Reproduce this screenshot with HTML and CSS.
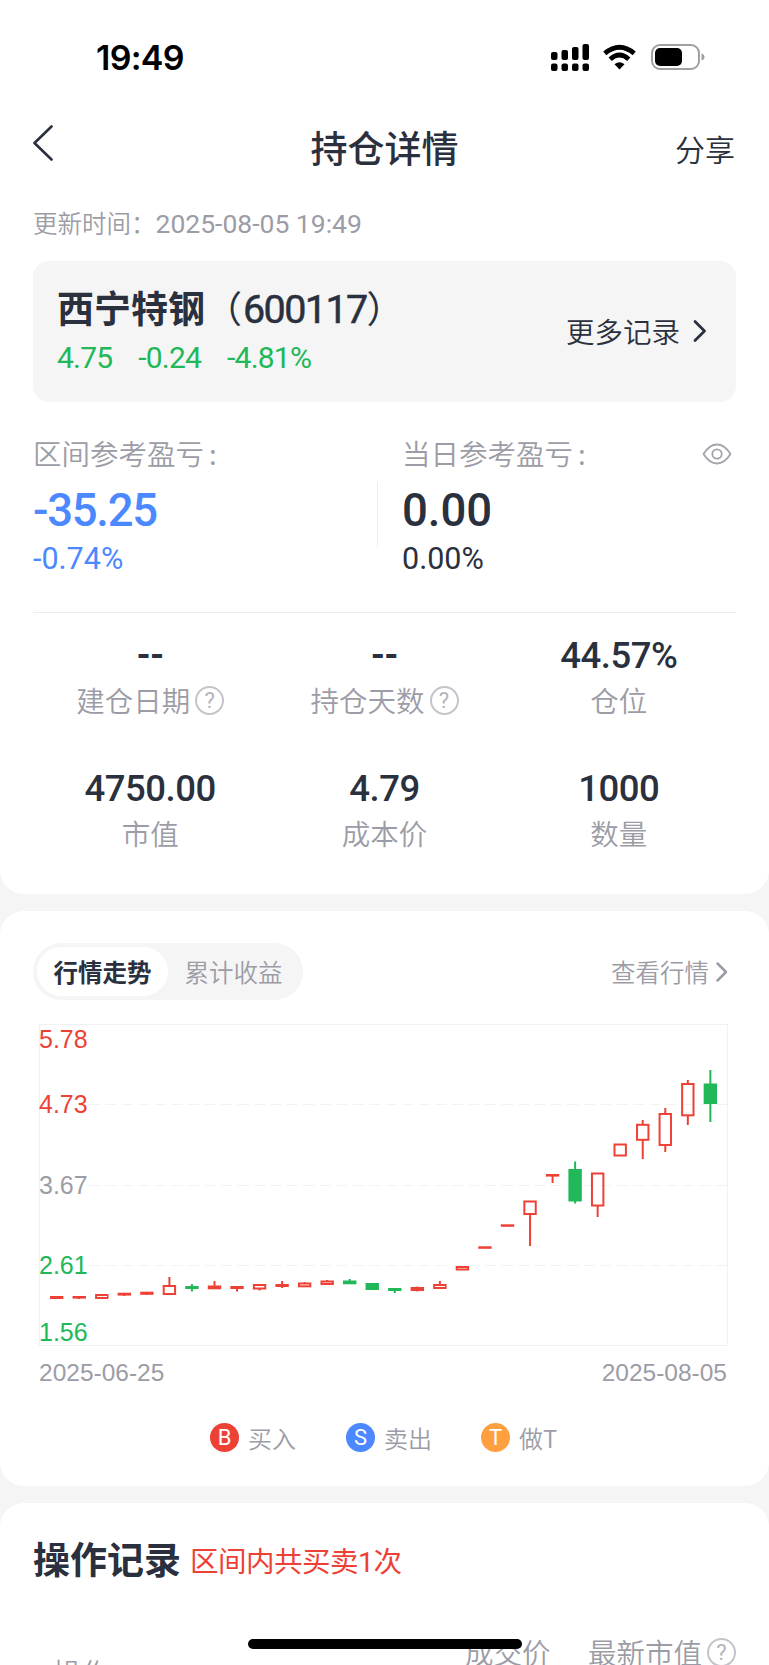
FILE: index.html
```html
<!DOCTYPE html>
<html lang="zh-CN">
	<head>
		<meta charset="utf-8">
		<title>持仓详情</title>
		<link rel="stylesheet" href="styles.css">
	</head>
	<body>
		<div class="page">
			<div class="card top">
				<div class="status">
					<span class="time">19:49</span>
					<svg class="status_icons" width="156" height="30" viewBox="0 0 156 30">
						<g fill="#000">
							<rect x="1" y="9" width="6.500" height="8" rx="2"/>
							<rect x="11.500" y="7" width="6.500" height="10" rx="2"/>
							<rect x="22" y="4" width="6.500" height="13" rx="2"/>
							<rect x="32.500" y="1" width="6.500" height="16" rx="2"/>
							<rect x="1" y="20.500" width="6.500" height="7.500" rx="2"/>
							<rect x="11.500" y="20.500" width="6.500" height="7.500" rx="2"/>
							<rect x="22" y="20.500" width="6.500" height="7.500" rx="2"/>
							<rect x="32.500" y="20.500" width="6.500" height="7.500" rx="2"/>
							<path d="M69.500 26.500 L64.500 21.300 Q69.500 17 74.500 21.300 Z"/>
							<rect x="105" y="5" width="27" height="18" rx="5"/>
						</g>
						<g fill="none" stroke="#000" stroke-width="4.800">
							<path d="M54.800 10.300 Q69.500 -2 84.200 10.300"/>
							<path d="M60.200 16.200 Q69.500 8 78.800 16.200"/>
						</g>
						<rect x="102" y="2" width="47" height="24" rx="8" fill="none" stroke="#a0a0a0" stroke-width="2"/>
						<path d="M151.500 10.500 Q154.500 11.500 154.500 14 Q154.500 16.500 151.500 17.500 Z" fill="#a0a0a0"/>
					</svg>
				</div>
				<div class="nav">
					<svg width="24" height="38" viewBox="0 0 24 38"><path d="M18.500 2.500 L1.500 19 L18.500 35.500" fill="none" stroke="#2a303d" stroke-width="2.600" stroke-linecap="round" stroke-linejoin="round"/></svg>
					<h1>持仓详情</h1>
					<span class="share">分享</span>
				</div>
				<div class="update">更新时间：<span class="update_time">2025-08-05 19:49</span></div>

				<div class="stock">
					<div>
						<div class="stock_name">西宁特钢<span class="code">（<i>600117</i>）</span></div>
						<div class="stock_price"><span>4.75</span><span>-0.24</span><span>-4.81%</span></div>
					</div>
					<div class="more">更多记录
						<svg width="16" height="24" viewBox="0 0 16 24"><path d="M3 2.500 L12.500 12 L3 21.500" fill="none" stroke="#2a303d" stroke-width="2.800" stroke-linecap="round" stroke-linejoin="round"/></svg>
					</div>
				</div>

				<div class="profit">
					<div class="profit_item blue">
						<div class="label">区间参考盈亏<i>:</i></div>
						<div class="big">-35.25</div>
						<div class="rate">-0.74%</div>
					</div>
					<div class="profit_item right">
						<div class="label">当日参考盈亏<i>:</i>
							<svg class="eye" width="30" height="24" viewBox="0 0 30 24"><path d="M1.500 12 Q7.500 2.500 15 2.500 Q22.500 2.500 28.500 12 Q22.500 21.500 15 21.500 Q7.500 21.500 1.500 12 Z" fill="none" stroke="#a3a3ad" stroke-width="1.800" stroke-linejoin="round"/><circle cx="15" cy="12" r="4.700" fill="none" stroke="#a3a3ad" stroke-width="1.800"/></svg>
						</div>
						<div class="big">0.00</div>
						<div class="rate">0.00%</div>
					</div>
				</div>

				<div class="grid">
					<div class="cell"><b class="none">--</b><span>建仓日期<em class="help">?</em></span></div>
					<div class="cell"><b class="none">--</b><span>持仓天数<em class="help">?</em></span></div>
					<div class="cell"><b>44.57%</b><span>仓位</span></div>
					<div class="cell"><b>4750.00</b><span>市值</span></div>
					<div class="cell"><b>4.79</b><span>成本价</span></div>
					<div class="cell"><b>1000</b><span>数量</span></div>
				</div>
			</div>

			<div class="card trend">
				<div class="trend_head">
					<div class="tabs">
						<span class="current">行情走势</span>
						<span>累计收益</span>
					</div>
					<div class="look">查看行情
						<svg width="14" height="22" viewBox="0 0 14 22"><path d="M2.500 2.500 L11 11 L2.500 19.500" fill="none" stroke="#9c9ca6" stroke-width="2.500" stroke-linecap="round" stroke-linejoin="round"/></svg>
					</div>
				</div>
				<!-- K线图 -->
				<svg class="chart" id="chart" width="690" height="324" viewBox="39 1024 690 324">
					<rect class="frame" x="39.500" y="1024.500" width="688" height="321"/>
					<path class="dash" d="M89 1104.500 H727 M89 1185.500 H727 M89 1265.500 H727"/>
					<text class="up" x="39" y="1047.500">5.78</text>
					<text class="up" x="39" y="1113">4.73</text>
					<text class="gray" x="39" y="1193.500">3.67</text>
					<text class="down" x="39" y="1274">2.61</text>
					<text class="down" x="39" y="1340.500">1.56</text>
				</svg>
				<div class="dates"><span>2025-06-25</span><span>2025-08-05</span></div>
				<div class="legend">
					<div><i class="buy">B</i>买入</div>
					<div><i class="sell">S</i>卖出</div>
					<div><i class="both">T</i>做T</div>
				</div>
			</div>

			<div class="card record">
				<div class="record_head"><h2>操作记录</h2><span>区间内共买卖1次</span></div>
				<div class="record_cols">
					<span class="col_op">操作</span>
					<span class="col_price">成交价</span>
					<span class="col_value">最新市值<em class="help">?</em></span>
				</div>
			</div>
			<div class="home_bar"></div>
		</div>
		<script src="chart.js"></script>
	</body>
</html>
```
FILE: chart.js
```js
/* 每根K线: 最高, 实体上, 实体下, 最低, 是否上涨 */
var list = [
	[1297, 1297, 1298, 1299, 1],
	[1296, 1297, 1297.6, 1299, 1],
	[1295, 1295, 1298, 1298, 1],
	[1293, 1293.7, 1294.6, 1296, 1],
	[1292, 1292.7, 1293.8, 1295, 1],
	[1277, 1286, 1294, 1294, 1],
	[1284, 1287, 1288, 1291.500, 0],
	[1281, 1286.500, 1288.300, 1289, 1],
	[1286, 1287, 1288, 1291.500, 1],
	[1284.500, 1285, 1288.500, 1290.500, 1],
	[1281, 1285, 1286, 1288, 1],
	[1282, 1283.500, 1286.300, 1287, 1],
	[1280, 1281.500, 1284, 1285, 1],
	[1279, 1281.500, 1283.300, 1284, 0],
	[1283, 1284, 1289, 1290, 0],
	[1288, 1289, 1290, 1293, 0],
	[1286.500, 1288, 1290, 1291.500, 1],
	[1281, 1285, 1288, 1288, 1],
	[1267, 1267, 1269.500, 1270, 1],
	[1247, 1247.300, 1247.800, 1248, 1],
	[1225, 1225.300, 1225.800, 1226, 1],
	[1201, 1201.500, 1214, 1246, 1],
	[1174, 1175, 1175.600, 1183, 1],
	[1161.500, 1170, 1200.500, 1203.500, 0],
	[1173, 1173.500, 1205.500, 1217, 1],
	[1144, 1144.500, 1155.500, 1156, 1],
	[1120, 1124.800, 1139.800, 1159, 1],
	[1108, 1114, 1145, 1152, 1],
	[1080, 1084, 1115.300, 1125, 1],
	[1070, 1084.500, 1103, 1122, 0]
];
var html = '';
for (var i = 0; i < list.length; i++) {
	var k = list[i];
	var x = 56.7 + i * 22.54;
	var name = k[4] ? 'k_up' : 'k_down';
	/* 上影线和下影线 */
	html += '<path class="' + name + '" d="M' + x + ' ' + k[0] + 'V' + k[1] + 'M' + x + ' ' + k[2] + 'V' + k[3] + '"/>';
	html += '<rect class="' + name + '" x="' + (x - 5.7) + '" y="' + k[1] + '" width="11.4" height="' + (k[2] - k[1]) + '"/>';
}
document.getElementById('chart').innerHTML += html;
```
FILE: styles.css
```css
body{
	margin: 0;
	background-color: #f5f5f5;
	font-family: "Noto Sans CJK SC", sans-serif;
	color: #2a303d;
}
.page{
	position: relative;
	width: 769px;
	height: 1665px;
	overflow: hidden;
}
.card{
	box-sizing: border-box;
	background-color: #fff;
	border-radius: 24px;
	padding: 0 33px;
}
i, em{
	font-style: normal;
}
/* 数字字体 */
.update_time, .code i, .stock_price, .big, .rate, .cell b, .help, .legend i{
	font-family: Roboto, sans-serif;
}
/* 顶部 */
.top{
	height: 894px;
	border-radius: 0 0 24px 24px;
	overflow: hidden;
}
.status{
	display: flex;
	justify-content: space-between;
	align-items: center;
	height: 30px;
	margin: 43px 30px 0 63px;
}
.time{
	font: 600 34px/30px Inter, sans-serif;
	letter-spacing: -0.7px;
	color: #000;
}
.nav{
	display: grid;
	grid-template-columns: 100px 1fr 100px;
	align-items: center;
	height: 60px;
	margin-top: 43px;
}
.nav svg{
	margin-top: -9px;
}
.nav h1{
	margin: 0;
	font-size: 37px;
	line-height: 60px;
	font-weight: 500;
	text-align: center;
}
.share{
	padding-top: 2px;
	padding-right: 1px;
	font-size: 30px;
	line-height: 60px;
	font-weight: 350;
	text-align: right;
}
.update{
	margin-top: 29px;
	height: 36px;
	font-size: 24.500px;
	line-height: 36px;
	font-weight: 350;
	color: #9c9ca6;
}
.update_time{
	font-size: 26.500px;
	font-weight: 400;
}
.stock{
	display: flex;
	justify-content: space-between;
	align-items: center;
	box-sizing: border-box;
	height: 141px;
	margin-top: 20px;
	padding: 0 28px 0 24px;
	border-radius: 16px;
	background-color: #f5f5f5;
}
.stock_name{
	height: 48px;
	font-size: 37px;
	line-height: 50px;
	font-weight: 700;
	white-space: nowrap;
}
.code{
	font-weight: 400;
}
.code i{
	margin-left: 1px;
	font-size: 39.500px;
	letter-spacing: -1.600px;
	-webkit-text-stroke: 0.5px #2a303d;
}
.stock_price{
	display: flex;
	gap: 26px;
	padding-top: 4px;
	font-size: 30px;
	line-height: 48px;
	letter-spacing: -0.8px;
	color: #20b858;
}
.more{
	display: flex;
	align-items: center;
	gap: 12px;
	margin-top: -2px;
	font-size: 28.500px;
	font-weight: 350;
}
/* 盈亏 */
.profit{
	display: flex;
	height: 210px;
	border-bottom: 1px solid #ececec;
}
.profit_item{
	position: relative;
	width: 344px;
	padding-top: 29px;
}
.right{
	width: 334px;
	padding-left: 25px;
}
.right::before{
	content: "";
	position: absolute;
	left: 0;
	top: 80px;
	width: 1px;
	height: 65px;
	background-color: #ececec;
}
.label{
	display: flex;
	align-items: center;
	height: 42px;
	font-size: 28.500px;
	font-weight: 350;
	color: #9c9ca6;
}
.label i{
	margin-left: 5px;
}
.eye{
	margin-left: auto;
	margin-top: 4px;
	margin-right: 4px;
}
.big{
	height: 60px;
	margin-top: 8px;
	font-size: 45.500px;
	line-height: 60px;
	font-weight: 500;
}
.rate{
	font-size: 30.500px;
	line-height: 36px;
}
.blue .big, .blue .rate{
	color: #4c88ff;
}
.blue .big{
	letter-spacing: -1.300px;
}
.grid{
	display: grid;
	grid-template-columns: 1fr 1fr 1fr;
	grid-auto-rows: 133px;
	padding-top: 17px;
}
.cell{
	text-align: center;
}
.cell b{
	display: block;
	height: 48px;
	font-size: 36.500px;
	line-height: 51px;
	letter-spacing: -0.5px;
	font-weight: 500;
}
.cell .none{
	font-family: "Noto Sans CJK SC", sans-serif;
	line-height: 41px;
	letter-spacing: 0;
	font-weight: 700;
}
.cell span{
	display: flex;
	justify-content: center;
	align-items: center;
	height: 42px;
	font-size: 28.500px;
	font-weight: 350;
	color: #9c9ca6;
}
.help{
	box-sizing: border-box;
	width: 29px;
	height: 29px;
	margin-left: 5px;
	border: 2px solid #c4c4ca;
	border-radius: 50%;
	font-size: 22px;
	line-height: 26px;
	font-weight: 400;
	text-align: center;
	color: #b4b4bc;
}
.cell .help{
	margin-top: 2px;
}
/* 走势 */
.trend{
	height: 575px;
	margin-top: 17px;
	padding-top: 32px;
}
.trend_head{
	display: flex;
	justify-content: space-between;
	align-items: center;
}
.tabs{
	display: flex;
	box-sizing: border-box;
	width: 270px;
	height: 57px;
	padding: 4px;
	border-radius: 29px;
	background-color: #f5f5f5;
}
.tabs span{
	width: 131px;
	border-radius: 25px;
	font-size: 24.500px;
	line-height: 49px;
	font-weight: 350;
	text-align: center;
	color: #9c9ca6;
}
.tabs .current{
	background-color: #fff;
	font-weight: 700;
	color: #2a303d;
}
.look{
	display: flex;
	align-items: center;
	gap: 6px;
	margin-right: 7px;
	font-size: 24.500px;
	font-weight: 350;
	color: #9c9ca6;
}
.chart{
	display: block;
	margin: 24px 0 0 6px;
	font: 25px "Liberation Sans", sans-serif;
}
.frame{
	fill: none;
	stroke: #f1f1f1;
}
.dash{
	fill: none;
	stroke: #f3f3f3;
	stroke-dasharray: 11 5.500;
}
.up{ fill: #ee4136; }
.down{ fill: #20b858; }
.gray{ fill: #9c9ca6; }
.k_up{
	fill: none;
	stroke: #ee4136;
	stroke-width: 2;
}
.k_down{
	fill: #20b858;
	stroke: #20b858;
	stroke-width: 2;
}
.dates{
	display: flex;
	justify-content: space-between;
	margin: 8px 9px 0 6px;
	font: 24.500px/34px "Liberation Sans", sans-serif;
	color: #9c9ca6;
}
.legend{
	display: flex;
	gap: 50px;
	margin: 29px 0 0 177px;
}
.legend div{
	display: flex;
	align-items: center;
	height: 36px;
	font-size: 24px;
	font-weight: 350;
	color: #9c9ca6;
}
.legend div:last-child{
	margin-left: -1px;
}
.legend i{
	width: 29px;
	height: 29px;
	margin-right: 9px;
	border-radius: 50%;
	font-size: 22px;
	line-height: 29px;
	font-weight: 400;
	text-align: center;
	color: #fff;
}
.buy{ background-color: #ee4136; }
.sell{ background-color: #4c88ff; }
.both{ background-color: #ff9f40; }
/* 操作记录 */
.record{
	height: 200px;
	margin-top: 17px;
	padding-top: 28px;
}
.record_head{
	display: flex;
	height: 55px;
}
.record_head h2{
	margin: 0;
	font-size: 37px;
	line-height: 54px;
	font-weight: 700;
}
.record_head span{
	margin-left: 9px;
	font-family: Roboto, "Noto Sans CJK SC", sans-serif;
	font-size: 28.500px;
	line-height: 64px;
	letter-spacing: -0.5px;
	color: #ee4136;
}
.record_cols{
	display: flex;
	align-items: flex-start;
	margin-top: 45px;
	font-size: 28.500px;
	line-height: 42px;
	font-weight: 350;
	color: #9c9ca6;
}
.col_op{
	width: 432px;
	padding: 20px 0 0 20px;
	box-sizing: border-box;
}
.col_value{
	display: flex;
	align-items: center;
	margin-left: auto;
}
.home_bar{
	position: absolute;
	left: 248px;
	top: 1639px;
	width: 274px;
	height: 10px;
	border-radius: 5px;
	background-color: #000;
}
```
